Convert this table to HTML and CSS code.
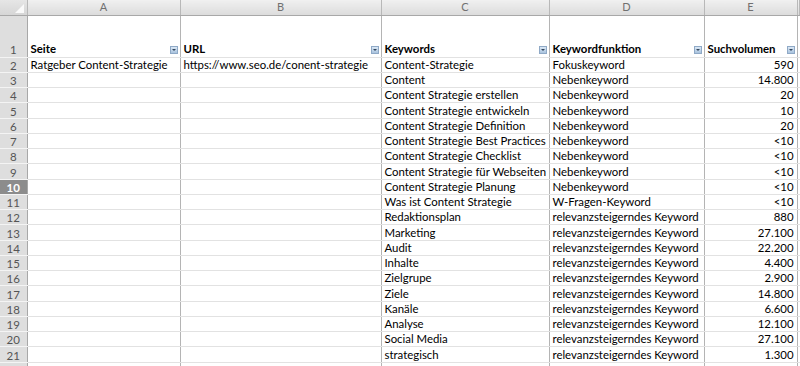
FILE: index.html
```html
<!DOCTYPE html>
<html lang="de">
<head>
  <meta charset="UTF-8" />
  <title>Keyword-Recherche Content-Strategie</title>
  <link rel="stylesheet" href="styles.css">
</head>
<body>
  <table class="sheet">
    <colgroup>
      <col class="c-head">
      <col class="c-a">
      <col class="c-b">
      <col class="c-c">
      <col class="c-d">
      <col class="c-e">
      <col>
    </colgroup>
    <thead>
      <tr class="letters">
        <th class="corner"><span class="corner-mark"></span></th>
        <th>A</th><th>B</th><th>C</th><th>D</th><th>E</th><th class="rest"></th>
      </tr>
    </thead>
    <tbody>
      <tr class="titles">
        <th>1</th>
        <td>Seite<i class="filter"></i></td>
        <td>URL<i class="filter"></i></td>
        <td>Keywords<i class="filter"></i></td>
        <td>Keywordfunktion<i class="filter"></i></td>
        <td>Suchvolumen<i class="filter"></i></td>
        <td class="rest"></td>
      </tr>
      <tr><th>2</th><td>Ratgeber Content-Strategie</td><td>https://www.seo.de/conent-strategie</td><td>Content-Strategie</td><td>Fokuskeyword</td><td class="num">590</td><td class="rest"></td></tr>
      <tr><th>3</th><td></td><td></td><td>Content</td><td>Nebenkeyword</td><td class="num">14.800</td><td class="rest"></td></tr>
      <tr><th>4</th><td></td><td></td><td>Content Strategie erstellen</td><td>Nebenkeyword</td><td class="num">20</td><td class="rest"></td></tr>
      <tr><th>5</th><td></td><td></td><td>Content Strategie entwickeln</td><td>Nebenkeyword</td><td class="num">10</td><td class="rest"></td></tr>
      <tr><th>6</th><td></td><td></td><td>Content Strategie Definition</td><td>Nebenkeyword</td><td class="num">20</td><td class="rest"></td></tr>
      <tr><th>7</th><td></td><td></td><td>Content Strategie Best Practices</td><td>Nebenkeyword</td><td class="num">&lt;10</td><td class="rest"></td></tr>
      <tr><th>8</th><td></td><td></td><td>Content Strategie Checklist</td><td>Nebenkeyword</td><td class="num">&lt;10</td><td class="rest"></td></tr>
      <tr><th>9</th><td></td><td></td><td>Content Strategie für Webseiten</td><td>Nebenkeyword</td><td class="num">&lt;10</td><td class="rest"></td></tr>
      <tr class="active"><th>10</th><td></td><td></td><td>Content Strategie Planung</td><td>Nebenkeyword</td><td class="num">&lt;10</td><td class="rest"></td></tr>
      <tr><th>11</th><td></td><td></td><td>Was ist Content Strategie</td><td>W-Fragen-Keyword</td><td class="num">&lt;10</td><td class="rest"></td></tr>
      <tr><th>12</th><td></td><td></td><td>Redaktionsplan</td><td>relevanzsteigerndes Keyword</td><td class="num">880</td><td class="rest"></td></tr>
      <tr><th>13</th><td></td><td></td><td>Marketing</td><td>relevanzsteigerndes Keyword</td><td class="num">27.100</td><td class="rest"></td></tr>
      <tr><th>14</th><td></td><td></td><td>Audit</td><td>relevanzsteigerndes Keyword</td><td class="num">22.200</td><td class="rest"></td></tr>
      <tr><th>15</th><td></td><td></td><td>Inhalte</td><td>relevanzsteigerndes Keyword</td><td class="num">4.400</td><td class="rest"></td></tr>
      <tr><th>16</th><td></td><td></td><td>Zielgrupe</td><td>relevanzsteigerndes Keyword</td><td class="num">2.900</td><td class="rest"></td></tr>
      <tr><th>17</th><td></td><td></td><td>Ziele</td><td>relevanzsteigerndes Keyword</td><td class="num">14.800</td><td class="rest"></td></tr>
      <tr><th>18</th><td></td><td></td><td>Kanäle</td><td>relevanzsteigerndes Keyword</td><td class="num">6.600</td><td class="rest"></td></tr>
      <tr><th>19</th><td></td><td></td><td>Analyse</td><td>relevanzsteigerndes Keyword</td><td class="num">12.100</td><td class="rest"></td></tr>
      <tr><th>20</th><td></td><td></td><td>Social Media</td><td>relevanzsteigerndes Keyword</td><td class="num">27.100</td><td class="rest"></td></tr>
      <tr><th>21</th><td></td><td></td><td>strategisch</td><td>relevanzsteigerndes Keyword</td><td class="num">1.300</td><td class="rest"></td></tr>
      <tr><th>22</th><td></td><td></td><td></td><td></td><td></td><td class="rest"></td></tr>
    </tbody>
  </table>
</body>
</html>
```

FILE: styles.css
```css
* { box-sizing: border-box; }

body {
  margin: 0;
  background: #fff;
  overflow: hidden;
  font-family: Lato, 'Open Sans', sans-serif;
}

.sheet {
  border-collapse: collapse;
  table-layout: fixed;
  width: 800px;
  font-size: 11.4px;
  color: #000;
}

.c-head { width: 27px; }
.c-a { width: 153px; }
.c-b { width: 201px; }
.c-c { width: 168px; }
.c-d { width: 155px; }
.c-e { width: 93px; }

/* column letters */
.letters th {
  height: 15px;
  padding: 0;
  font-weight: normal;
  font-size: 11px;
  color: #707070;
  background: linear-gradient(#f0f0f0, #dcdcdc);
  border-right: 1px solid #b8b8b8;
  border-bottom: 1px solid #a8a8a8;
  line-height: 14px;
}

.letters .corner {
  position: relative;
  background: linear-gradient(#e6e6e6, #d6d6d6);
}

.corner-mark {
  position: absolute;
  right: 3px;
  bottom: 2px;
  width: 0;
  height: 0;
  border-left: 9px solid transparent;
  border-bottom: 9px solid #fafafa;
}

/* row numbers */
tbody th {
  padding: 0;
  font-size: 11.5px;
  font-weight: normal;
  color: #555;
  text-align: center;
  vertical-align: bottom;
  background: #dedede;
  border-right: 1px solid #a8a8a8;
  border-bottom: 1px solid #f4f4f4;
  line-height: 13px;
}

tbody tr { height: 15.25px; }

tbody td {
  padding: 0 3px;
  white-space: nowrap;
  overflow: hidden;
  vertical-align: bottom;
  line-height: 14px;
  border-bottom: 1px solid #e2e2e2;
  border-right: 1px solid #b4b4b4;
}

tbody td.rest {
  border-right: none;
  background: #fff;
}

.titles { height: 42px; }

.titles td {
  position: relative;
  font-weight: bold;
  padding-bottom: 1px;
}

.titles th { padding-bottom: 1px; }

.filter {
  position: absolute;
  right: 2px;
  bottom: 3px;
  width: 8px;
  height: 8px;
  background: linear-gradient(#dbe8f5, #a9c3de);
  border: 1px solid #8fa9c6;
}

.filter::after {
  content: "";
  position: absolute;
  left: 1px;
  top: 2px;
  border-left: 2px solid transparent;
  border-right: 2px solid transparent;
  border-top: 2px solid #33475e;
}

.num { text-align: right; }

.active th {
  background: #8c8c8c;
  color: #fff;
  font-weight: bold;
}
```
